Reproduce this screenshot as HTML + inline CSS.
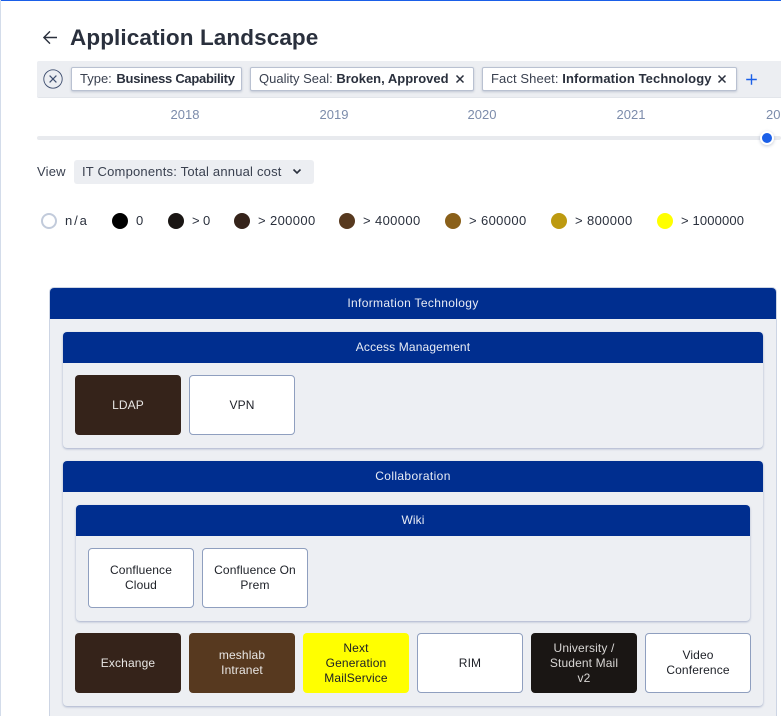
<!DOCTYPE html>
<html lang="en">
<head>
<meta charset="utf-8">
<title>Application Landscape</title>
<style>
html,body{margin:0;padding:0;background:#fff;overflow:hidden;width:781px;height:716px}
body{font-family:"Liberation Sans",sans-serif;color:#2a303d}
#p{position:absolute;left:0;top:0;width:781px;height:716px;overflow:hidden}
.a{position:absolute;box-sizing:border-box}
.t{position:absolute;white-space:nowrap;line-height:16px}
.chip{position:absolute;box-sizing:border-box;top:67px;height:24px;background:#fff;border:1px solid #b9c1d1;border-radius:2px;box-shadow:0 1px 2px rgba(60,80,120,.25);font-size:13px;line-height:22px;white-space:nowrap;color:#3a4150;padding-left:8px}
.chip b{color:#2a303d}
.yr{position:absolute;top:107px;width:60px;text-align:center;font-size:13px;line-height:16px;color:#7c8cab}
.dot{position:absolute;top:213px;width:16px;height:16px;border-radius:50%;box-sizing:border-box}
.lg{position:absolute;top:213px;font-size:13px;line-height:16px;letter-spacing:.38px;color:#2a303d;white-space:nowrap}
.box{position:absolute;box-sizing:border-box;background:#edeff3;border-radius:4px;box-shadow:0 1px 2px rgba(80,100,150,.45)}
.hd{position:absolute;left:0;top:0;right:0;height:31px;background:#002e8f;border-radius:4px 4px 0 0;color:#e8ecf5;font-size:12px;line-height:31px;text-align:center;letter-spacing:.1px}
.tile{position:absolute;box-sizing:border-box;width:106px;height:60px;border-radius:4px;display:flex;align-items:center;justify-content:center;text-align:center;font-size:12px;line-height:15px;letter-spacing:.13px;padding:0;white-space:nowrap}
.w{background:#fff;border:1px solid #8f9fbf;color:#1c1f26}
</style>
</head>
<body>
<div id="p">
<div class="a" style="left:0;top:0;width:781px;height:1px;background:#1a5fe8"></div>
<div class="a" style="left:0;top:0;width:1px;height:716px;background:#d3dcea"></div>

<svg class="a" style="left:42px;top:29px" width="17" height="17" viewBox="0 0 17 17"><path d="M15 8.5H2M8 2.4L1.9 8.5L8 14.6" fill="none" stroke="#2a303d" stroke-width="1.4"/></svg>
<div class="t" style="left:70px;top:24px;font-size:22.5px;line-height:27px;font-weight:700;color:#2a303d;letter-spacing:.1px">Application Landscape</div>

<div class="a" style="left:37px;top:61px;width:744px;height:37px;background:#eceef2;border-bottom:1px solid #e2e5ea;border-radius:2px 0 0 2px"></div>
<svg class="a" style="left:43px;top:69px" width="20" height="20" viewBox="0 0 20 20"><circle cx="10" cy="10" r="9.2" fill="none" stroke="#3f4f70" stroke-width=".9"/><path d="M6.6 6.6L13.4 13.4M13.4 6.6L6.6 13.4" stroke="#3f4f70" stroke-width="1.2"/></svg>

<div class="chip" style="left:71px;width:171px">Type: <b style="margin-left:1px;letter-spacing:-.28px">Business Capability</b></div>
<div class="chip" style="left:250px;width:224px">Quality Seal: <b>Broken, Approved</b></div>
<svg class="a" style="left:455px;top:74px" width="10" height="10" viewBox="0 0 10 10"><path d="M1.5 1.5L8.5 8.5M8.5 1.5L1.5 8.5" stroke="#2a303d" stroke-width="1.5"/></svg>
<div class="chip" style="left:482px;width:255px;letter-spacing:.1px">Fact Sheet: <b>Information Technology</b></div>
<svg class="a" style="left:717px;top:74px" width="10" height="10" viewBox="0 0 10 10"><path d="M1.5 1.5L8.5 8.5M8.5 1.5L1.5 8.5" stroke="#2a303d" stroke-width="1.5"/></svg>
<svg class="a" style="left:745px;top:73px" width="13" height="13" viewBox="0 0 13 13"><path d="M6.5 1.2V11.8M1.2 6.5H11.8" stroke="#1a5fe8" stroke-width="1.4"/></svg>

<div class="yr" style="left:155px">2018</div>
<div class="yr" style="left:304px">2019</div>
<div class="yr" style="left:452px">2020</div>
<div class="yr" style="left:601px">2021</div>
<div class="yr" style="left:766px;width:30px;text-align:left">2022</div>

<div class="a" style="left:37px;top:136px;width:744px;height:4px;background:#e8eaee;border-radius:2px"></div>
<div class="a" style="left:760px;top:131px;width:14px;height:14px;border-radius:50%;background:#1a5fe8;border:2px solid #fff;box-shadow:0 1px 3px rgba(60,80,120,.3)"></div>

<div class="t" style="left:37px;top:164px;font-size:13px;color:#3a4150;letter-spacing:.2px">View</div>
<div class="a" style="left:74px;top:160px;width:240px;height:24px;background:#eceef2;border-radius:3px;font-size:13px;line-height:24px;padding-left:8px;color:#3a4150;white-space:nowrap;letter-spacing:.2px">IT Components: Total annual cost</div>
<svg class="a" style="left:292px;top:168px" width="10" height="7" viewBox="0 0 10 7"><path d="M1.5 1.5L5 5L8.5 1.5" fill="none" stroke="#2a303d" stroke-width="1.6"/></svg>

<div class="dot" style="left:41px;background:#fff;border:2px solid #c2cbdb"></div><div class="lg" style="left:65px;letter-spacing:1.9px">n/a</div>
<div class="dot" style="left:112px;background:#000"></div><div class="lg" style="left:136px">0</div>
<div class="dot" style="left:168px;background:#1a1614"></div><div class="lg" style="left:192px;letter-spacing:-.1px">&gt; 0</div>
<div class="dot" style="left:234px;background:#35231a"></div><div class="lg" style="left:258px">&gt; 200000</div>
<div class="dot" style="left:339px;background:#57391f"></div><div class="lg" style="left:363px">&gt; 400000</div>
<div class="dot" style="left:445px;background:#8a601a"></div><div class="lg" style="left:469px">&gt; 600000</div>
<div class="dot" style="left:551px;background:#bd9a10"></div><div class="lg" style="left:575px">&gt; 800000</div>
<div class="dot" style="left:657px;background:#ffff00"></div><div class="lg" style="left:681px;letter-spacing:.15px">&gt; 1000000</div>

<div class="box" style="left:50px;top:288px;width:726px;height:428px;box-shadow:0 0 0 1px #cdd5e4;border-radius:4px 4px 0 0">
  <div class="hd" style="letter-spacing:.34px">Information Technology</div>
</div>

<div class="box" style="left:63px;top:332px;width:700px;height:116px">
  <div class="hd" style="letter-spacing:.14px">Access Management</div>
</div>
<div class="tile" style="left:75px;top:375px;background:#35231a;color:#e8e6e4">LDAP</div>
<div class="tile w" style="left:189px;top:375px">VPN</div>

<div class="box" style="left:63px;top:461px;width:700px;height:245px">
  <div class="hd" style="letter-spacing:.37px">Collaboration</div>
</div>
<div class="box" style="left:76px;top:505px;width:674px;height:116px">
  <div class="hd">Wiki</div>
</div>
<div class="tile w" style="left:88px;top:548px">Confluence<br>Cloud</div>
<div class="tile w" style="left:202px;top:548px">Confluence On<br>Prem</div>

<div class="tile" style="left:75px;top:633px;background:#35231a;color:#e8e6e4">Exchange</div>
<div class="tile" style="left:189px;top:633px;background:#57391f;color:#e8e6e4">meshlab<br>Intranet</div>
<div class="tile" style="left:303px;top:633px;background:#ffff00;color:#1c1f26">Next<br>Generation<br>MailService</div>
<div class="tile w" style="left:417px;top:633px">RIM</div>
<div class="tile" style="left:531px;top:633px;background:#1a1614;color:#d8d6d4">University /<br>Student Mail<br>v2</div>
<div class="tile w" style="left:645px;top:633px">Video<br>Conference</div>
</div>
</body>
</html>
